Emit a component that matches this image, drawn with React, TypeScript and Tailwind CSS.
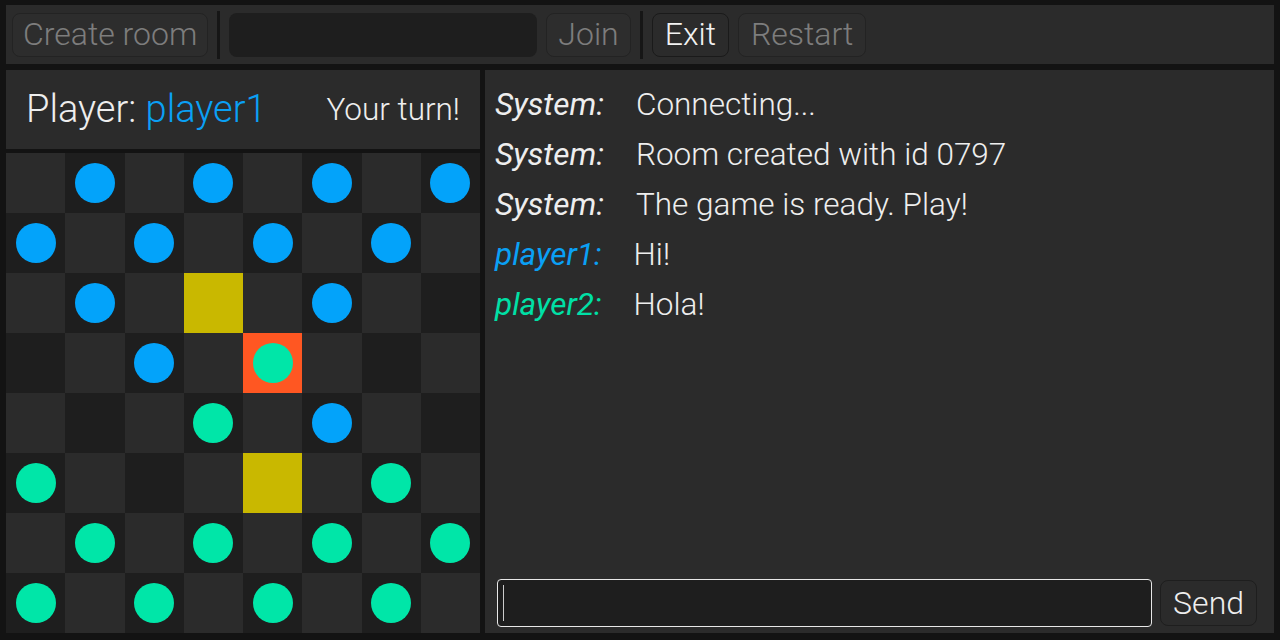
import React from 'react';

type Piece = 'b' | 'g' | null;

const BOARD: string[] = [
  '.b.b.b.b',
  'b.b.b.b.',
  '.b.Y.b..',
  '..b.O...',
  '...g.b..',
  'g...Y.g.',
  '.g.g.g.g',
  'g.g.g.g.',
];

const MESSAGES = [
  { who: 'System', color: 'text-[#eeeeee]', text: 'Connecting...' },
  { who: 'System', color: 'text-[#eeeeee]', text: 'Room created with id 0797' },
  { who: 'System', color: 'text-[#eeeeee]', text: 'The game is ready. Play!' },
  { who: 'player1', color: 'text-[#0aa0f5]', text: 'Hi!' },
  { who: 'player2', color: 'text-[#00e0a6]', text: 'Hola!' },
];

function Separator() {
  return <div className="h-[48px] w-[3px] bg-[#161616]" />;
}

function Cell({ code, row, col }: { code: string; row: number; col: number }) {
  const dark = (row + col) % 2 === 1;
  let bg = dark ? 'bg-[#1e1e1e]' : 'bg-[#2b2b2b]';
  if (code === 'Y') bg = 'bg-[#c9b800]';
  if (code === 'O') bg = 'bg-[#ff5722]';
  let piece: Piece = null;
  if (code === 'b') piece = 'b';
  if (code === 'g' || code === 'O') piece = 'g';
  return (
    <div className={`flex h-[60px] items-center justify-center ${bg}`}>
      {piece === 'b' && <div className="h-[40px] w-[40px] rounded-full bg-[#03a3fa]" />}
      {piece === 'g' && <div className="h-[40px] w-[40px] rounded-full bg-[#00e6a8]" />}
    </div>
  );
}

export default function App() {
  return (
    <div
      className="flex h-[640px] w-[1280px] flex-col gap-[6px] bg-[#131313] px-[6px] pt-[5px] pb-[7px] font-light text-[#eeeeee]"
      style={{ fontFamily: 'Roboto, "Liberation Sans", sans-serif' }}
    >
      <div className="flex h-[59px] shrink-0 items-center gap-[9px] bg-[#2b2b2b] px-[6px]">
        <button className="h-[44px] rounded-lg border border-[#232323] bg-[#2d2d2d] px-[10px] pb-[1px] text-[32px] leading-[38px] text-[#7d7d7d]">
          Create room
        </button>
        <Separator />
        <div className="h-[44px] w-[308px] rounded-lg bg-[#1e1e1e]" />
        <button className="h-[44px] rounded-lg border border-[#232323] bg-[#2d2d2d] px-[11px] pb-[1px] text-[32px] leading-[38px] text-[#7d7d7d]">
          Join
        </button>
        <Separator />
        <button className="h-[44px] rounded-lg border border-[#1a1a1a] bg-[#2b2b2b] px-[12px] pb-[1px] text-[32px] leading-[38px] text-[#f2f2f2]">
          Exit
        </button>
        <button className="h-[44px] rounded-lg border border-[#232323] bg-[#2d2d2d] px-[12px] pb-[1px] text-[32px] leading-[38px] text-[#7d7d7d]">
          Restart
        </button>
      </div>

      <div className="flex min-h-0 flex-1 gap-[5px]">
        <div className="flex w-[474px] flex-col gap-[4px]">
          <div className="flex h-[79px] items-center justify-between bg-[#2b2b2b] px-[20px]">
            <div className="text-[38px]">
              Player: <span className="text-[#0aa0f5]">player1</span>
            </div>
            <div className="text-[31.5px]">Your turn!</div>
          </div>
          <div className="grid grid-cols-8">
            {BOARD.map((line, r) =>
              line.split('').map((code, c) => <Cell key={`${r}-${c}`} code={code} row={r} col={c} />)
            )}
          </div>
        </div>

        <div className="flex flex-1 flex-col bg-[#2b2b2b]">
          <div className="flex-1 px-[10px] pt-[10px]">
            {MESSAGES.map((m, i) => (
              <div key={i} className="flex h-[50px] items-center text-[31.5px]">
                <span className={`mr-[32px] font-normal italic ${m.color}`}>{m.who}:</span>
                <span>{m.text}</span>
              </div>
            ))}
          </div>
          <div className="flex items-center gap-[8px] pr-[17px] pb-[6px] pl-[12px]">
            <div className="flex h-[48px] flex-1 items-center rounded-[4px] border border-[#e8e8e8] bg-[#1e1e1e] px-[5px]">
              <div className="h-[36px] w-px bg-[#cccccc]" />
            </div>
            <button className="h-[46px] rounded-lg border border-[#1e1e1e] bg-[#2b2b2b] px-[12px] pb-[1px] text-[32px] leading-[38px] text-[#eeeeee]">
              Send
            </button>
          </div>
        </div>
      </div>
    </div>
  );
}
